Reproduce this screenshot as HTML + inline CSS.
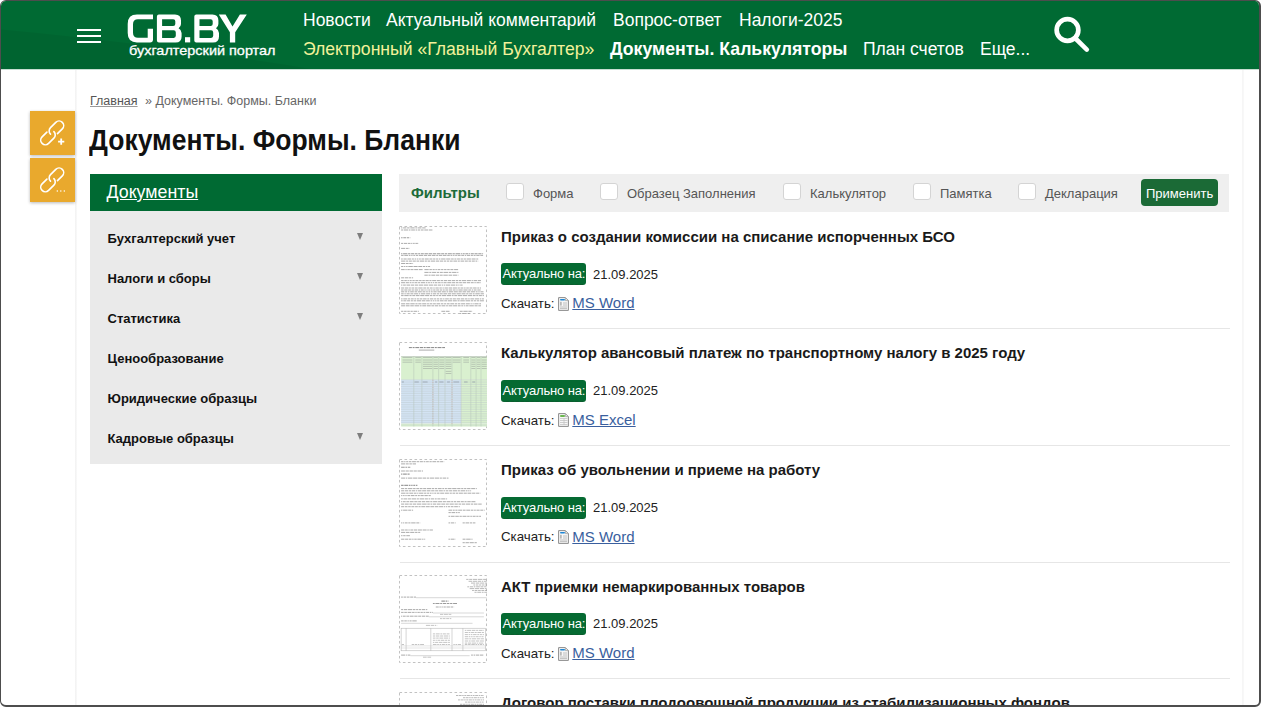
<!DOCTYPE html>
<html><head><meta charset="utf-8">
<style>
html,body{margin:0;padding:0;width:1261px;height:707px;overflow:hidden;background:#fff;}
body{font-family:"Liberation Sans",sans-serif;position:relative;}
.a{position:absolute;white-space:nowrap;line-height:1;}
#frame{position:absolute;left:0;top:0;width:1261px;height:707px;box-sizing:border-box;border-style:solid;border-color:#4d4d4d;border-width:1px 2px 2px 1px;border-radius:6px;overflow:hidden;background:#fff;}
#hdr{position:absolute;left:0;top:0;width:1258px;height:68px;background:#006a33;overflow:hidden;}
.nav{font-size:17.5px;color:#fff;}
.bar{position:absolute;left:76px;width:24px;height:2px;background:#fff;}
.vl{position:absolute;top:69px;width:2px;height:640px;background:linear-gradient(90deg,#f1f1f1,#fafafa);}
.side{font-size:13px;font-weight:bold;color:#111;}
.arr{position:absolute;left:356px;width:0;height:0;border-left:3.5px solid transparent;border-right:3.5px solid transparent;border-top:7px solid #7d7d7d;}
.cb{position:absolute;top:181.8px;width:15.5px;height:15.5px;border:1px solid #d4d4d4;border-radius:3px;background:#fff;}
.flab{font-size:13px;color:#555;}
.thumb{position:absolute;left:398px;width:88px;height:88px;background:#fff;}
.ttl{font-size:15px;font-weight:bold;color:#1a1a1a;}
.badge{position:absolute;left:500px;width:85px;height:21px;background:#056a32;border-radius:3px;border-bottom:1px dashed #0d5a2e;}
.btxt{font-size:13px;color:#fff;letter-spacing:-0.15px;}
.date{font-size:13px;color:#222;}
.dl{font-size:13.3px;color:#222;}
.lnk{font-size:15px;color:#3a5f9e;text-decoration:underline;}
.sep{position:absolute;left:399px;width:830px;height:1px;background:#e6e6e6;}
.ico{position:absolute;left:556.5px;width:11px;height:14px;}
</style></head><body>
<div id="frame">
  <div id="hdr">
    <svg width="1258" height="68" style="position:absolute;left:0;top:0">
      <path d="M0 28.5 C 100 38, 200 50, 310 68 L0 68 Z" fill="#000" opacity="0.055"/>
      <g fill="#fff" fill-rule="evenodd">
        <path d="M152 13.6 L136 13.6 Q126.7 13.6 126.7 23 L126.7 32 Q126.7 41.4 136 41.4 L149 41.4 Q152 41.4 152 38.4 L152 27.8 L146.7 27.8 L146.7 36.8 L137 36.8 Q132 36.8 132 31.8 L132 23.2 Q132 18.2 137 18.2 L152 18.2 Z"/>
        <path d="M157.9 13.6 L174 13.6 Q180 13.6 180 19.6 L180 23 Q180 25.6 177.6 27.2 Q180.6 28.9 180.6 32 L180.6 35.4 Q180.6 41.4 174.6 41.4 L157.9 41.4 Q155.9 41.4 155.9 39.4 L155.9 15.6 Q155.9 13.6 157.9 13.6 Z M161.1 18.2 L172.2 18.2 Q174.3 18.2 174.3 20.3 L174.3 22.9 Q174.3 25 172.2 25 L161.1 25 Z M161.1 29.3 L172.7 29.3 Q174.8 29.3 174.8 31.4 L174.8 34.8 Q174.8 36.9 172.7 36.9 L161.1 36.9 Z"/>
        <rect x="184" y="36.2" width="5.2" height="5.2"/>
        <path transform="translate(37.4 0)" d="M157.9 13.6 L174 13.6 Q180 13.6 180 19.6 L180 23 Q180 25.6 177.6 27.2 Q180.6 28.9 180.6 32 L180.6 35.4 Q180.6 41.4 174.6 41.4 L157.9 41.4 Q155.9 41.4 155.9 39.4 L155.9 15.6 Q155.9 13.6 157.9 13.6 Z M161.1 18.2 L172.2 18.2 Q174.3 18.2 174.3 20.3 L174.3 22.9 Q174.3 25 172.2 25 L161.1 25 Z M161.1 29.3 L172.7 29.3 Q174.8 29.3 174.8 31.4 L174.8 34.8 Q174.8 36.9 172.7 36.9 L161.1 36.9 Z"/>
        <path d="M217.8 13.6 L224.6 13.6 L231.5 25.6 L238.9 13.6 L245.8 13.6 L234.2 31.2 L234.2 41.4 L228.9 41.4 L228.9 31.2 Z"/>
      </g>
    </svg>
    <div class="bar" style="top:28px"></div>
    <div class="bar" style="top:34px"></div>
    <div class="bar" style="top:40px"></div>
    <div class="a" style="left:128.2px;top:43.4px;font-size:13.5px;color:#fff;-webkit-text-stroke:0.3px #fff;transform:scaleX(1.07);transform-origin:0 0">бухгалтерский портал</div>
    <div class="a nav" style="left:302px;top:11px">Новости</div>
    <div class="a nav" style="left:385px;top:11px">Актуальный комментарий</div>
    <div class="a nav" style="left:612px;top:11px">Вопрос-ответ</div>
    <div class="a nav" style="left:738px;top:11px">Налоги-2025</div>
    <div class="a nav" style="left:302px;top:40px;color:#f2f29a;font-size:17.6px">Электронный «Главный Бухгалтер»</div>
    <div class="a nav" style="left:609px;top:40px;font-weight:bold;font-size:17.7px">Документы. Калькуляторы</div>
    <div class="a nav" style="left:862px;top:40px">План счетов</div>
    <div class="a nav" style="left:979px;top:40px">Еще...</div>
    <svg width="44" height="44" style="position:absolute;left:1048.6px;top:12.6px" viewBox="0 0 44 44">
      <circle cx="17.5" cy="16" r="10.85" fill="none" stroke="#fff" stroke-width="4.7"/>
      <line x1="25" y1="24" x2="36.8" y2="35.6" stroke="#fff" stroke-width="4.6" stroke-linecap="round"/>
    </svg>
  </div>
  <div style="position:absolute;left:0;top:68px;width:1258px;height:1px;background:rgba(0,106,51,0.22)"></div>
  <div class="vl" style="left:74px"></div>
  <div class="vl" style="left:1241px;background:linear-gradient(90deg,#f5f5f5,#f9f9f9)"></div>

  <!-- orange link buttons -->
  <div style="position:absolute;left:29px;top:110px;width:44.5px;height:43.6px;background:#e9a92d;box-shadow:0 1px 3px rgba(0,0,0,.28)">
    <svg width="45" height="44" viewBox="0 0 45 44" style="position:absolute;left:0;top:0">
      <g transform="translate(22.2 21.9) rotate(-45)" fill="none" stroke="#fff" stroke-width="1.6" stroke-linecap="round">
        <path d="M3.2 4.3 L10 4.3 A4.6 4.6 0 0 0 10 -4.9 L2.5 -4.9 A4.6 4.6 0 0 0 -2.1 -0.3"/>
        <path d="M-3.2 -4.3 L-10 -4.3 A4.6 4.6 0 0 0 -10 4.9 L-2.5 4.9 A4.6 4.6 0 0 0 2.1 0.3"/>
      </g>
      <g stroke="#fff" stroke-width="1.8"><line x1="28.1" y1="30.6" x2="34.3" y2="30.6"/><line x1="31.2" y1="27.5" x2="31.2" y2="33.7"/></g>
    </svg>
  </div>
  <div style="position:absolute;left:29px;top:157px;width:44.5px;height:43.6px;background:#e9a92d;box-shadow:0 1px 3px rgba(0,0,0,.28)">
    <svg width="45" height="44" viewBox="0 0 45 44" style="position:absolute;left:0;top:0">
      <g transform="translate(22.2 21.9) rotate(-45)" fill="none" stroke="#fff" stroke-width="1.6" stroke-linecap="round">
        <path d="M3.2 4.3 L10 4.3 A4.6 4.6 0 0 0 10 -4.9 L2.5 -4.9 A4.6 4.6 0 0 0 -2.1 -0.3"/>
        <path d="M-3.2 -4.3 L-10 -4.3 A4.6 4.6 0 0 0 -10 4.9 L-2.5 4.9 A4.6 4.6 0 0 0 2.1 0.3"/>
      </g>
      <g fill="#fff"><circle cx="27.3" cy="33" r="0.75"/><circle cx="30.8" cy="33" r="0.75"/><circle cx="34.3" cy="33" r="0.75"/></g>
    </svg>
  </div>

  <!-- breadcrumb & title -->
  <div class="a" style="left:89px;top:94px;font-size:12.5px;color:#555;text-decoration:underline;text-decoration-color:#9a9a9a">Главная</div>
  <div class="a" style="left:144px;top:94px;font-size:12.5px;color:#666">»&nbsp;Документы. Формы. Бланки</div>
  <div class="a" style="left:88px;top:126.6px;font-size:26.5px;font-weight:bold;color:#111;transform:scaleY(1.1);transform-origin:0 22.4px">Документы. Формы. Бланки</div>

  <!-- sidebar -->
  <div style="position:absolute;left:89px;top:173px;width:292px;height:37px;background:#006a33"></div>
  <div class="a" style="left:105.5px;top:183px;font-size:17.8px;color:#fff;text-decoration:underline">Документы</div>
  <div style="position:absolute;left:89px;top:210px;width:292px;height:253px;background:#eaeaea"></div>
  <div class="a side" style="left:106.5px;top:230.5px">Бухгалтерский учет</div>
  <div class="arr" style="top:232px"></div>
  <div class="a side" style="left:106.5px;top:270.5px">Налоги и сборы</div>
  <div class="arr" style="top:272px"></div>
  <div class="a side" style="left:106.5px;top:310.5px">Статистика</div>
  <div class="arr" style="top:312px"></div>
  <div class="a side" style="left:106.5px;top:350.5px">Ценообразование</div>
  <div class="a side" style="left:106.5px;top:390.5px">Юридические образцы</div>
  <div class="a side" style="left:106.5px;top:430.5px">Кадровые образцы</div>
  <div class="arr" style="top:432px"></div>

  <!-- filter bar -->
  <div style="position:absolute;left:398px;top:173px;width:830px;height:38px;background:#efefef"></div>
  <div class="a" style="left:410px;top:184px;font-size:15px;font-weight:bold;color:#1d6b3a">Фильтры</div>
  <div class="cb" style="left:505px"></div><div class="a flab" style="left:532px;top:186px">Форма</div>
  <div class="cb" style="left:599px"></div><div class="a flab" style="left:626px;top:186px">Образец Заполнения</div>
  <div class="cb" style="left:782px"></div><div class="a flab" style="left:809px;top:186px">Калькулятор</div>
  <div class="cb" style="left:912px"></div><div class="a flab" style="left:939px;top:186px">Памятка</div>
  <div class="cb" style="left:1017px"></div><div class="a flab" style="left:1044px;top:186px">Декларация</div>
  <div style="position:absolute;left:1140px;top:178px;width:77px;height:27px;background:#1b6a36;border-radius:4px"></div>
  <div class="a" style="left:1145px;top:186px;font-size:13px;color:#fff">Применить</div>

  <div id="items"><div class="thumb" style="top:224.50px"><svg width="88" height="88" viewBox="0 0 88 88" style="position:absolute;left:0;top:0"><rect x="0.5" y="0.5" width="87" height="87" fill="none" stroke="#c2c2c2" stroke-width="1" stroke-dasharray="2.6 2.4"/><g transform="translate(1 1)"><line x1="1.1" y1="0.9" x2="25.9" y2="0.9" stroke="#9c9c9c" stroke-width="0.85" stroke-dasharray="1.3 0.7 3.3 0.7 2.5 0.7 4.4 0.7 1.5 0.7 3.9 0.7 3.4 0.7"/><line x1="1.1" y1="3.0" x2="32.9" y2="3.0" stroke="#9c9c9c" stroke-width="0.85" stroke-dasharray="2.0 0.7 4.3 0.7 1.7 0.7 3.7 0.7 1.6 0.7 2.1 0.7 2.9 0.7 3.7 0.7 3.7 0.7"/><line x1="1.1" y1="10.8" x2="10.3" y2="10.8" stroke="#9c9c9c" stroke-width="1.1" stroke-dasharray="1.5 0.7 3.0 0.7 2.0 0.7 4.5 0.7"/><line x1="1.1" y1="16.4" x2="18.8" y2="16.4" stroke="#9c9c9c" stroke-width="0.85" stroke-dasharray="2.0 0.7 3.2 0.7 2.8 0.7 1.2 0.7 1.6 0.7 2.5 0.7 1.4 0.7"/><line x1="1.1" y1="21.4" x2="9.6" y2="21.4" stroke="#9c9c9c" stroke-width="0.85" stroke-dasharray="4.0 0.7 2.8 0.7 4.5 0.7"/><line x1="1.1" y1="26.7" x2="83.1" y2="26.7" stroke="#9c9c9c" stroke-width="1.1" stroke-dasharray="1.3 0.7 4.3 0.7 2.3 0.7 3.0 0.7 2.7 0.7 2.0 0.7 2.9 0.7 3.4 0.7 3.5 0.7 3.4 0.7 3.6 0.7 2.9 0.7 2.5 0.7 3.8 0.7 2.3 0.7 4.5 0.7 1.2 0.7 2.1 0.7 3.0 0.7 1.2 0.7 2.8 0.7 3.1 0.7 3.2 0.7 1.5 0.7"/><line x1="1.1" y1="28.4" x2="83.1" y2="28.4" stroke="#9c9c9c" stroke-width="0.85" stroke-dasharray="2.5 0.7 3.8 0.7 1.7 0.7 1.4 0.7 1.9 0.7 2.4 0.7 4.1 0.7 3.2 0.7 3.5 0.7 3.6 0.7 2.1 0.7 3.0 0.7 3.8 0.7 2.6 0.7 1.9 0.7 1.4 0.7 1.7 0.7 3.0 0.7 2.9 0.7 1.3 0.7 3.4 0.7 1.9 0.7 2.0 0.7 3.3 0.7 3.3 0.7"/><line x1="1.1" y1="32.0" x2="78.2" y2="32.0" stroke="#9c9c9c" stroke-width="0.85" stroke-dasharray="1.7 0.7 3.2 0.7 3.7 0.7 2.1 0.7 1.5 0.7 1.6 0.7 1.7 0.7 2.5 0.7 4.0 0.7 3.0 0.7 2.3 0.7 2.0 0.7 1.6 0.7 4.4 0.7 4.2 0.7 2.6 0.7 2.0 0.7 2.8 0.7 2.3 0.7 2.3 0.7 4.3 0.7 4.0 0.7 4.3 0.7"/><line x1="1.1" y1="34.1" x2="78.2" y2="34.1" stroke="#9c9c9c" stroke-width="0.85" stroke-dasharray="4.3 0.7 2.0 0.7 3.1 0.7 3.2 0.7 2.7 0.7 4.2 0.7 2.1 0.7 2.5 0.7 4.4 0.7 3.1 0.7 3.4 0.7 2.4 0.7 2.4 0.7 2.7 0.7 3.8 0.7 1.9 0.7 3.8 0.7 2.8 0.7 2.7 0.7 2.9 0.7 1.6 0.7 1.3 0.7"/><line x1="1.1" y1="36.5" x2="13.1" y2="36.5" stroke="#9c9c9c" stroke-width="0.85" stroke-dasharray="3.9 0.7 2.9 0.7 2.4 0.7 4.1 0.7"/><line x1="1.1" y1="39.5" x2="30.1" y2="39.5" stroke="#9c9c9c" stroke-width="0.85" stroke-dasharray="2.3 0.7 1.3 0.7 1.5 0.7 4.5 0.7 4.1 0.7 3.9 0.7 2.4 0.7 1.4 0.7 2.8 0.7"/><line x1="1.1" y1="42.6" x2="23.0" y2="42.6" stroke="#9c9c9c" stroke-width="0.85" stroke-dasharray="3.6 0.7 1.3 0.7 2.4 0.7 3.0 0.7 4.0 0.7 3.7 0.7"/><line x1="24.4" y1="42.6" x2="58.4" y2="42.6" stroke="#9c9c9c" stroke-width="0.85" stroke-dasharray="4.3 0.7 2.5 0.7 2.1 0.7 1.5 0.7 2.8 0.7 2.3 0.7 2.4 0.7 2.5 0.7 3.0 0.7 4.0 0.7"/><line x1="24.4" y1="45.4" x2="58.4" y2="45.4" stroke="#9c9c9c" stroke-width="0.85" stroke-dasharray="4.2 0.7 2.1 0.7 4.0 0.7 2.4 0.7 2.9 0.7 4.5 0.7 2.7 0.7 4.4 0.7 1.6 0.7"/><line x1="24.4" y1="48.2" x2="58.4" y2="48.2" stroke="#9c9c9c" stroke-width="0.85" stroke-dasharray="3.4 0.7 2.1 0.7 3.8 0.7 3.2 0.7 3.0 0.7 4.4 0.7 3.7 0.7 4.2 0.7 3.5 0.7"/><line x1="1.1" y1="50.8" x2="13.1" y2="50.8" stroke="#9c9c9c" stroke-width="0.85" stroke-dasharray="3.0 0.7 3.6 0.7 2.1 0.7 3.4 0.7"/><line x1="1.1" y1="53.6" x2="81.0" y2="53.6" stroke="#9c9c9c" stroke-width="0.85" stroke-dasharray="2.5 0.7 2.5 0.7 1.4 0.7 2.1 0.7 2.3 0.7 3.0 0.7 2.5 0.7 2.5 0.7 3.2 0.7 2.1 0.7 4.1 0.7 2.9 0.7 2.5 0.7 3.5 0.7 3.2 0.7 3.4 0.7 2.3 0.7 2.3 0.7 4.2 0.7 4.0 0.7 1.3 0.7 3.5 0.7 3.5 0.7"/><line x1="1.1" y1="55.7" x2="81.0" y2="55.7" stroke="#9c9c9c" stroke-width="0.85" stroke-dasharray="4.0 0.7 3.1 0.7 1.9 0.7 1.6 0.7 2.9 0.7 2.0 0.7 4.4 0.7 1.5 0.7 1.8 0.7 1.4 0.7 1.4 0.7 2.6 0.7 2.5 0.7 1.5 0.7 3.1 0.7 4.1 0.7 3.0 0.7 2.7 0.7 2.7 0.7 3.7 0.7 3.1 0.7 2.9 0.7 1.4 0.7 3.2 0.7 3.0 0.7"/><line x1="1.1" y1="58.1" x2="62.6" y2="58.1" stroke="#9c9c9c" stroke-width="0.85" stroke-dasharray="1.3 0.7 2.7 0.7 3.7 0.7 3.4 0.7 3.2 0.7 4.3 0.7 4.4 0.7 4.0 0.7 3.3 0.7 3.6 0.7 1.3 0.7 1.3 0.7 4.0 0.7 4.3 0.7 1.9 0.7 1.2 0.7 3.0 0.7"/><line x1="1.1" y1="61.0" x2="81.0" y2="61.0" stroke="#9c9c9c" stroke-width="0.85" stroke-dasharray="3.2 0.7 3.4 0.7 1.7 0.7 2.5 0.7 2.9 0.7 4.3 0.7 2.7 0.7 2.5 0.7 2.7 0.7 1.4 0.7 3.3 0.7 2.4 0.7 1.3 0.7 3.4 0.7 3.5 0.7 4.1 0.7 2.2 0.7 2.9 0.7 1.5 0.7 2.5 0.7 2.9 0.7 3.5 0.7 1.7 0.7 3.9 0.7"/><line x1="1.1" y1="63.0" x2="81.0" y2="63.0" stroke="#9c9c9c" stroke-width="0.85" stroke-dasharray="2.5 0.7 3.2 0.7 2.7 0.7 2.3 0.7 3.4 0.7 1.3 0.7 3.0 0.7 1.3 0.7 1.2 0.7 2.1 0.7 1.4 0.7 2.3 0.7 2.8 0.7 2.3 0.7 2.0 0.7 2.6 0.7 3.4 0.7 2.8 0.7 1.4 0.7 4.3 0.7 4.2 0.7 2.9 0.7 1.2 0.7 2.8 0.7 3.4 0.7"/><line x1="1.1" y1="64.8" x2="83.9" y2="64.8" stroke="#9c9c9c" stroke-width="0.85" stroke-dasharray="3.3 0.7 2.0 0.7 1.7 0.7 3.6 0.7 2.7 0.7 3.9 0.7 2.9 0.7 1.7 0.7 1.5 0.7 2.0 0.7 3.3 0.7 3.6 0.7 4.1 0.7 1.5 0.7 4.4 0.7 4.0 0.7 3.3 0.7 3.6 0.7 3.5 0.7 4.1 0.7 1.8 0.7 1.4 0.7 3.1 0.7"/><line x1="1.1" y1="66.8" x2="83.9" y2="66.8" stroke="#9c9c9c" stroke-width="0.85" stroke-dasharray="2.6 0.7 1.4 0.7 3.2 0.7 3.0 0.7 3.9 0.7 1.5 0.7 4.5 0.7 4.0 0.7 1.2 0.7 3.4 0.7 2.3 0.7 2.9 0.7 3.9 0.7 3.0 0.7 4.1 0.7 4.3 0.7 4.0 0.7 2.3 0.7 2.9 0.7 1.8 0.7 4.5 0.7 4.0 0.7"/><line x1="1.1" y1="68.6" x2="83.9" y2="68.6" stroke="#9c9c9c" stroke-width="0.85" stroke-dasharray="2.5 0.7 4.4 0.7 2.2 0.7 3.0 0.7 3.5 0.7 4.2 0.7 4.0 0.7 2.6 0.7 2.4 0.7 1.7 0.7 2.6 0.7 4.4 0.7 4.0 0.7 1.9 0.7 3.0 0.7 4.3 0.7 4.1 0.7 4.3 0.7 2.8 0.7 1.9 0.7 3.0 0.7 1.3 0.7"/><line x1="1.1" y1="71.9" x2="83.9" y2="71.9" stroke="#9c9c9c" stroke-width="0.85" stroke-dasharray="1.5 0.7 3.7 0.7 2.3 0.7 3.0 0.7 1.9 0.7 1.9 0.7 2.8 0.7 3.5 0.7 2.0 0.7 3.4 0.7 1.9 0.7 2.5 0.7 2.5 0.7 1.4 0.7 3.6 0.7 2.6 0.7 3.1 0.7 3.4 0.7 3.3 0.7 2.8 0.7 1.5 0.7 3.7 0.7 4.4 0.7 1.2 0.7 2.9 0.7"/><line x1="1.1" y1="73.8" x2="83.9" y2="73.8" stroke="#9c9c9c" stroke-width="0.85" stroke-dasharray="1.6 0.7 3.0 0.7 3.1 0.7 2.0 0.7 2.6 0.7 4.4 0.7 3.4 0.7 3.7 0.7 1.5 0.7 1.7 0.7 1.4 0.7 2.0 0.7 3.7 0.7 2.9 0.7 4.4 0.7 3.8 0.7 2.1 0.7 4.5 0.7 4.5 0.7 2.6 0.7 2.3 0.7 2.3 0.7 3.9 0.7"/><line x1="1.1" y1="76.8" x2="81.0" y2="76.8" stroke="#9c9c9c" stroke-width="0.85" stroke-dasharray="4.0 0.7 3.8 0.7 4.4 0.7 2.2 0.7 3.2 0.7 4.2 0.7 1.8 0.7 2.8 0.7 2.7 0.7 3.7 0.7 2.5 0.7 2.1 0.7 2.7 0.7 3.9 0.7 2.4 0.7 2.4 0.7 4.1 0.7 3.9 0.7 1.3 0.7 1.2 0.7 4.2 0.7 3.0 0.7"/><line x1="1.1" y1="78.8" x2="81.0" y2="78.8" stroke="#9c9c9c" stroke-width="0.85" stroke-dasharray="4.2 0.7 3.6 0.7 3.5 0.7 4.5 0.7 1.9 0.7 3.8 0.7 3.9 0.7 2.9 0.7 3.2 0.7 1.9 0.7 3.9 0.7 1.8 0.7 3.8 0.7 4.1 0.7 2.7 0.7 1.7 0.7 1.2 0.7 3.0 0.7 4.5 0.7 3.1 0.7 2.8 0.7"/><line x1="1.1" y1="84.3" x2="18.8" y2="84.3" stroke="#9c9c9c" stroke-width="0.85" stroke-dasharray="2.3 0.7 2.5 0.7 2.5 0.7 2.3 0.7 3.8 0.7 2.0 0.7"/><line x1="41.4" y1="84.3" x2="49.9" y2="84.3" stroke="#9c9c9c" stroke-width="0.85" stroke-dasharray="3.7 0.7 3.7 0.7"/><line x1="59.8" y1="84.3" x2="72.5" y2="84.3" stroke="#9c9c9c" stroke-width="0.85" stroke-dasharray="2.9 0.7 4.3 0.7 3.3 0.7 1.5 0.7"/><line x1="59.8" y1="86.7" x2="69.7" y2="86.7" stroke="#9c9c9c" stroke-width="0.85" stroke-dasharray="1.3 0.7 2.0 0.7 2.3 0.7 2.9 0.7"/></g></svg></div>
<div class="a ttl" style="left:500px;top:227.80px">Приказ о создании комиссии на списание испорченных БСО</div>
<div class="badge" style="top:262.20px"></div>
<div class="a btxt" style="left:501.6px;top:266.30px">Актуально на:</div>
<div class="a date" style="left:592px;top:266.50px">21.09.2025</div>
<div class="a dl" style="left:500px;top:296.00px">Скачать:</div>
<div class="ico" style="top:295.80px"><svg width="11" height="14" viewBox="0 0 11 14" style="position:absolute;left:0;top:0"><path d="M0.6 0.6 H7.4 L10.4 3.6 V13.4 H0.6 Z" fill="#f7f7f7" stroke="#8c8c8c" stroke-width="1"/><path d="M7.4 0.6 V3.6 H10.4" fill="none" stroke="#a0a0a0" stroke-width="0.8"/><rect x="2" y="2" width="5" height="1.6" rx="0.8" fill="#1c86d6"/><rect x="2.2" y="4.8" width="1.4" height="3.8" fill="#a8a8a8"/><g stroke="#b0b0b0" stroke-width="0.8"><line x1="5" y1="6" x2="9" y2="6"/><line x1="5" y1="8" x2="9" y2="8"/><line x1="2" y1="10" x2="9" y2="10"/><line x1="2" y1="11.6" x2="9" y2="11.6"/></g></svg></div>
<div class="a lnk" style="left:571.3px;top:294.30px">MS Word</div>
<div class="sep" style="top:327.30px"></div>
<div class="thumb" style="top:341.15px"><svg width="88" height="88" viewBox="0 0 88 88" style="position:absolute;left:0;top:0"><rect x="0.5" y="0.5" width="87" height="87" fill="none" stroke="#c2c2c2" stroke-width="1" stroke-dasharray="2.6 2.4"/><g transform="translate(1 1)"><rect x="1.1" y="13.5" width="86.3" height="23.3" fill="#d9f0cf"/><rect x="1.1" y="36.8" width="60.1" height="43.7" fill="#d3e3f3"/><rect x="61.2" y="36.8" width="26.2" height="43.7" fill="#d9f0cf"/><rect x="1.1" y="80.6" width="86.3" height="3.0" fill="#d9f0cf"/><line x1="32.9" y1="36.8" x2="32.9" y2="80.6" stroke="#e08080" stroke-width="0.6" stroke-dasharray="0.8 1.6"/><line x1="52.0" y1="36.8" x2="52.0" y2="80.6" stroke="#e08080" stroke-width="0.6" stroke-dasharray="0.8 1.6"/><line x1="13.8" y1="13.5" x2="13.8" y2="83.5" stroke="#b5c5b5" stroke-width="0.5"/><line x1="21.9" y1="13.5" x2="21.9" y2="83.5" stroke="#b5c5b5" stroke-width="0.5"/><line x1="32.9" y1="13.5" x2="32.9" y2="83.5" stroke="#b5c5b5" stroke-width="0.5"/><line x1="38.6" y1="13.5" x2="38.6" y2="83.5" stroke="#b5c5b5" stroke-width="0.5"/><line x1="45.0" y1="13.5" x2="45.0" y2="83.5" stroke="#b5c5b5" stroke-width="0.5"/><line x1="52.0" y1="13.5" x2="52.0" y2="83.5" stroke="#b5c5b5" stroke-width="0.5"/><line x1="61.2" y1="13.5" x2="61.2" y2="83.5" stroke="#b5c5b5" stroke-width="0.5"/><line x1="70.8" y1="13.5" x2="70.8" y2="83.5" stroke="#b5c5b5" stroke-width="0.5"/><line x1="76.1" y1="13.5" x2="76.1" y2="83.5" stroke="#b5c5b5" stroke-width="0.5"/><line x1="81.0" y1="13.5" x2="81.0" y2="83.5" stroke="#b5c5b5" stroke-width="0.5"/><line x1="1.1" y1="36.8" x2="87.4" y2="36.8" stroke="#b8c4c8" stroke-width="0.4"/><line x1="1.1" y1="39.1" x2="87.4" y2="39.1" stroke="#b8c4c8" stroke-width="0.4"/><line x1="1.1" y1="41.4" x2="87.4" y2="41.4" stroke="#b8c4c8" stroke-width="0.4"/><line x1="1.1" y1="43.6" x2="87.4" y2="43.6" stroke="#b8c4c8" stroke-width="0.4"/><line x1="1.1" y1="45.9" x2="87.4" y2="45.9" stroke="#b8c4c8" stroke-width="0.4"/><line x1="1.1" y1="48.2" x2="87.4" y2="48.2" stroke="#b8c4c8" stroke-width="0.4"/><line x1="1.1" y1="50.4" x2="87.4" y2="50.4" stroke="#b8c4c8" stroke-width="0.4"/><line x1="1.1" y1="52.7" x2="87.4" y2="52.7" stroke="#b8c4c8" stroke-width="0.4"/><line x1="1.1" y1="55.0" x2="87.4" y2="55.0" stroke="#b8c4c8" stroke-width="0.4"/><line x1="1.1" y1="57.2" x2="87.4" y2="57.2" stroke="#b8c4c8" stroke-width="0.4"/><line x1="1.1" y1="59.5" x2="87.4" y2="59.5" stroke="#b8c4c8" stroke-width="0.4"/><line x1="1.1" y1="61.7" x2="87.4" y2="61.7" stroke="#b8c4c8" stroke-width="0.4"/><line x1="1.1" y1="64.0" x2="87.4" y2="64.0" stroke="#b8c4c8" stroke-width="0.4"/><line x1="1.1" y1="66.3" x2="87.4" y2="66.3" stroke="#b8c4c8" stroke-width="0.4"/><line x1="1.1" y1="68.5" x2="87.4" y2="68.5" stroke="#b8c4c8" stroke-width="0.4"/><line x1="1.1" y1="70.8" x2="87.4" y2="70.8" stroke="#b8c4c8" stroke-width="0.4"/><line x1="1.1" y1="73.1" x2="87.4" y2="73.1" stroke="#b8c4c8" stroke-width="0.4"/><line x1="1.1" y1="75.3" x2="87.4" y2="75.3" stroke="#b8c4c8" stroke-width="0.4"/><line x1="1.1" y1="77.6" x2="87.4" y2="77.6" stroke="#b8c4c8" stroke-width="0.4"/><line x1="1.1" y1="79.8" x2="87.4" y2="79.8" stroke="#b8c4c8" stroke-width="0.4"/><line x1="1.1" y1="82.1" x2="87.4" y2="82.1" stroke="#b8c4c8" stroke-width="0.4"/><line x1="1.1" y1="13.5" x2="87.4" y2="13.5" stroke="#aab5aa" stroke-width="0.5"/><line x1="8.9" y1="4.6" x2="45.0" y2="4.6" stroke="#777" stroke-width="0.9" stroke-dasharray="3 0.7 2 0.7 4 0.7"/><line x1="18.8" y1="7.1" x2="34.3" y2="7.1" stroke="#888" stroke-width="0.7"/><line x1="2.5" y1="14.5" x2="12.4" y2="14.5" stroke="#a0a8a0" stroke-width="0.6"/><line x1="2.5" y1="17.0" x2="12.4" y2="17.0" stroke="#a0a8a0" stroke-width="0.6"/><line x1="2.5" y1="19.2" x2="12.4" y2="19.2" stroke="#a0a8a0" stroke-width="0.6"/><line x1="15.3" y1="14.5" x2="20.9" y2="14.5" stroke="#a0a8a0" stroke-width="0.6"/><line x1="15.3" y1="17.0" x2="20.9" y2="17.0" stroke="#a0a8a0" stroke-width="0.6"/><line x1="15.3" y1="19.2" x2="20.9" y2="19.2" stroke="#a0a8a0" stroke-width="0.6"/><line x1="23.0" y1="14.5" x2="32.2" y2="14.5" stroke="#a0a8a0" stroke-width="0.6"/><line x1="23.0" y1="17.0" x2="32.2" y2="17.0" stroke="#a0a8a0" stroke-width="0.6"/><line x1="23.0" y1="19.2" x2="32.2" y2="19.2" stroke="#a0a8a0" stroke-width="0.6"/><line x1="23.0" y1="21.3" x2="32.2" y2="21.3" stroke="#a0a8a0" stroke-width="0.6"/><line x1="23.0" y1="23.4" x2="32.2" y2="23.4" stroke="#a0a8a0" stroke-width="0.6"/><line x1="23.0" y1="25.5" x2="32.2" y2="25.5" stroke="#a0a8a0" stroke-width="0.6"/><line x1="33.6" y1="14.5" x2="37.9" y2="14.5" stroke="#a0a8a0" stroke-width="0.6"/><line x1="33.6" y1="17.0" x2="37.9" y2="17.0" stroke="#a0a8a0" stroke-width="0.6"/><line x1="33.6" y1="19.2" x2="37.9" y2="19.2" stroke="#a0a8a0" stroke-width="0.6"/><line x1="33.6" y1="21.3" x2="37.9" y2="21.3" stroke="#a0a8a0" stroke-width="0.6"/><line x1="33.6" y1="23.4" x2="37.9" y2="23.4" stroke="#a0a8a0" stroke-width="0.6"/><line x1="33.6" y1="25.5" x2="37.9" y2="25.5" stroke="#a0a8a0" stroke-width="0.6"/><line x1="39.3" y1="14.5" x2="44.2" y2="14.5" stroke="#a0a8a0" stroke-width="0.6"/><line x1="39.3" y1="17.0" x2="44.2" y2="17.0" stroke="#a0a8a0" stroke-width="0.6"/><line x1="39.3" y1="19.2" x2="44.2" y2="19.2" stroke="#a0a8a0" stroke-width="0.6"/><line x1="39.3" y1="21.3" x2="44.2" y2="21.3" stroke="#a0a8a0" stroke-width="0.6"/><line x1="39.3" y1="23.4" x2="44.2" y2="23.4" stroke="#a0a8a0" stroke-width="0.6"/><line x1="39.3" y1="25.5" x2="44.2" y2="25.5" stroke="#a0a8a0" stroke-width="0.6"/><line x1="45.7" y1="14.5" x2="51.3" y2="14.5" stroke="#a0a8a0" stroke-width="0.6"/><line x1="45.7" y1="17.0" x2="51.3" y2="17.0" stroke="#a0a8a0" stroke-width="0.6"/><line x1="45.7" y1="19.2" x2="51.3" y2="19.2" stroke="#a0a8a0" stroke-width="0.6"/><line x1="45.7" y1="21.3" x2="51.3" y2="21.3" stroke="#a0a8a0" stroke-width="0.6"/><line x1="45.7" y1="23.4" x2="51.3" y2="23.4" stroke="#a0a8a0" stroke-width="0.6"/><line x1="45.7" y1="25.5" x2="51.3" y2="25.5" stroke="#a0a8a0" stroke-width="0.6"/><line x1="45.7" y1="28.4" x2="51.3" y2="28.4" stroke="#a0a8a0" stroke-width="0.6"/><line x1="45.7" y1="30.5" x2="51.3" y2="30.5" stroke="#a0a8a0" stroke-width="0.6"/><line x1="52.7" y1="14.5" x2="60.5" y2="14.5" stroke="#a0a8a0" stroke-width="0.6"/><line x1="52.7" y1="17.0" x2="60.5" y2="17.0" stroke="#a0a8a0" stroke-width="0.6"/><line x1="52.7" y1="19.2" x2="60.5" y2="19.2" stroke="#a0a8a0" stroke-width="0.6"/><line x1="63.3" y1="14.5" x2="69.0" y2="14.5" stroke="#a0a8a0" stroke-width="0.6"/><line x1="63.3" y1="17.0" x2="69.0" y2="17.0" stroke="#a0a8a0" stroke-width="0.6"/><line x1="63.3" y1="19.2" x2="69.0" y2="19.2" stroke="#a0a8a0" stroke-width="0.6"/><line x1="71.4" y1="14.5" x2="75.4" y2="14.5" stroke="#a0a8a0" stroke-width="0.6"/><line x1="71.4" y1="17.0" x2="75.4" y2="17.0" stroke="#a0a8a0" stroke-width="0.6"/><line x1="71.4" y1="19.2" x2="75.4" y2="19.2" stroke="#a0a8a0" stroke-width="0.6"/><line x1="71.4" y1="21.3" x2="75.4" y2="21.3" stroke="#a0a8a0" stroke-width="0.6"/><line x1="71.4" y1="23.4" x2="75.4" y2="23.4" stroke="#a0a8a0" stroke-width="0.6"/><line x1="71.4" y1="25.5" x2="75.4" y2="25.5" stroke="#a0a8a0" stroke-width="0.6"/><line x1="76.8" y1="14.5" x2="80.3" y2="14.5" stroke="#a0a8a0" stroke-width="0.6"/><line x1="76.8" y1="17.0" x2="80.3" y2="17.0" stroke="#a0a8a0" stroke-width="0.6"/><line x1="76.8" y1="19.2" x2="80.3" y2="19.2" stroke="#a0a8a0" stroke-width="0.6"/><line x1="76.8" y1="21.3" x2="80.3" y2="21.3" stroke="#a0a8a0" stroke-width="0.6"/><line x1="76.8" y1="23.4" x2="80.3" y2="23.4" stroke="#a0a8a0" stroke-width="0.6"/><line x1="76.8" y1="25.5" x2="80.3" y2="25.5" stroke="#a0a8a0" stroke-width="0.6"/><line x1="81.7" y1="14.5" x2="86.7" y2="14.5" stroke="#a0a8a0" stroke-width="0.6"/><line x1="81.7" y1="17.0" x2="86.7" y2="17.0" stroke="#a0a8a0" stroke-width="0.6"/><line x1="81.7" y1="19.2" x2="86.7" y2="19.2" stroke="#a0a8a0" stroke-width="0.6"/><line x1="81.7" y1="21.3" x2="86.7" y2="21.3" stroke="#a0a8a0" stroke-width="0.6"/><line x1="81.7" y1="23.4" x2="86.7" y2="23.4" stroke="#a0a8a0" stroke-width="0.6"/><line x1="81.7" y1="25.5" x2="86.7" y2="25.5" stroke="#a0a8a0" stroke-width="0.6"/><line x1="1.8" y1="39.0" x2="3.9" y2="39.0" stroke="#8a96a0" stroke-width="0.7"/><line x1="14.5" y1="39.0" x2="18.8" y2="39.0" stroke="#8a96a0" stroke-width="0.7"/><line x1="22.7" y1="39.0" x2="27.6" y2="39.0" stroke="#8a96a0" stroke-width="0.7"/><line x1="35.1" y1="39.0" x2="37.2" y2="39.0" stroke="#8a96a0" stroke-width="0.7"/><line x1="39.3" y1="39.0" x2="43.5" y2="39.0" stroke="#8a96a0" stroke-width="0.7"/><line x1="47.1" y1="39.0" x2="49.9" y2="39.0" stroke="#8a96a0" stroke-width="0.7"/><line x1="53.4" y1="39.0" x2="59.1" y2="39.0" stroke="#8a96a0" stroke-width="0.7"/><line x1="64.1" y1="39.0" x2="67.6" y2="39.0" stroke="#8a96a0" stroke-width="0.7"/><line x1="72.3" y1="39.0" x2="75.1" y2="39.0" stroke="#8a96a0" stroke-width="0.7"/></g></svg></div>
<div class="a ttl" style="left:500px;top:344.45px">Калькулятор авансовый платеж по транспортному налогу в 2025 году</div>
<div class="badge" style="top:378.85px"></div>
<div class="a btxt" style="left:501.6px;top:382.95px">Актуально на:</div>
<div class="a date" style="left:592px;top:383.15px">21.09.2025</div>
<div class="a dl" style="left:500px;top:412.65px">Скачать:</div>
<div class="ico" style="top:412.45px"><svg width="11" height="14" viewBox="0 0 11 14" style="position:absolute;left:0;top:0"><path d="M0.6 0.6 H7.4 L10.4 3.6 V13.4 H0.6 Z" fill="#f7f7f7" stroke="#8c8c8c" stroke-width="1"/><path d="M7.4 0.6 V3.6 H10.4" fill="none" stroke="#a0a0a0" stroke-width="0.8"/><rect x="2" y="2.2" width="5" height="1.6" rx="0.8" fill="#3fa21a"/><g stroke="#c4c4c4" stroke-width="0.8"><line x1="2" y1="5.5" x2="9.5" y2="5.5"/><line x1="2" y1="7.5" x2="9.5" y2="7.5"/><line x1="2" y1="9.5" x2="9.5" y2="9.5"/><line x1="2" y1="11.5" x2="9.5" y2="11.5"/><line x1="6" y1="5" x2="6" y2="12"/></g></svg></div>
<div class="a lnk" style="left:571.3px;top:410.95px">MS Excel</div>
<div class="sep" style="top:443.95px"></div>
<div class="thumb" style="top:457.80px"><svg width="88" height="88" viewBox="0 0 88 88" style="position:absolute;left:0;top:0"><rect x="0.5" y="0.5" width="87" height="87" fill="none" stroke="#c2c2c2" stroke-width="1" stroke-dasharray="2.6 2.4"/><g transform="translate(1 1)"><line x1="1.1" y1="1.7" x2="44.2" y2="1.7" stroke="#9c9c9c" stroke-width="0.85" stroke-dasharray="2.4 0.7 1.3 0.7 1.8 0.7 2.7 0.7 3.8 0.7 2.7 0.7 2.9 0.7 1.8 0.7 2.7 0.7 2.2 0.7 3.8 0.7 2.5 0.7 3.2 0.7 1.6 0.7"/><line x1="1.1" y1="3.9" x2="16.0" y2="3.9" stroke="#9c9c9c" stroke-width="0.85" stroke-dasharray="4.0 0.7 2.9 0.7 2.5 0.7 3.9 0.7"/><line x1="1.1" y1="7.3" x2="10.3" y2="7.3" stroke="#9c9c9c" stroke-width="1.1" stroke-dasharray="3.6 0.7 1.9 0.7 4.1 0.7"/><line x1="1.1" y1="11.0" x2="23.0" y2="11.0" stroke="#9c9c9c" stroke-width="0.85" stroke-dasharray="3.8 0.7 3.2 0.7 3.4 0.7 3.2 0.7 3.5 0.7 2.0 0.7"/><line x1="1.1" y1="14.1" x2="9.6" y2="14.1" stroke="#9c9c9c" stroke-width="1.1" stroke-dasharray="1.3 0.7 3.7 0.7 3.2 0.7"/><line x1="1.1" y1="18.1" x2="48.5" y2="18.1" stroke="#9c9c9c" stroke-width="0.85" stroke-dasharray="4.2 0.7 1.3 0.7 4.4 0.7 4.3 0.7 3.8 0.7 3.5 0.7 2.4 0.7 4.4 0.7 4.2 0.7 2.0 0.7 3.4 0.7 3.5 0.7"/><line x1="1.1" y1="25.4" x2="17.4" y2="25.4" stroke="#9c9c9c" stroke-width="1.1" stroke-dasharray="2.5 0.7 3.8 0.7 1.7 0.7 1.4 0.7 1.9 0.7 2.4 0.7"/><line x1="1.1" y1="28.6" x2="76.8" y2="28.6" stroke="#9c9c9c" stroke-width="0.85" stroke-dasharray="3.1 0.7 2.4 0.7 4.4 0.7 2.5 0.7 2.7 0.7 2.8 0.7 3.0 0.7 4.4 0.7 2.3 0.7 2.1 0.7 3.8 0.7 1.8 0.7 2.1 0.7 3.9 0.7 4.3 0.7 3.3 0.7 2.2 0.7 2.3 0.7 3.4 0.7 3.8 0.7 3.3 0.7"/><line x1="1.1" y1="30.8" x2="71.1" y2="30.8" stroke="#9c9c9c" stroke-width="0.85" stroke-dasharray="2.9 0.7 3.5 0.7 2.1 0.7 3.4 0.7 1.3 0.7 3.7 0.7 3.8 0.7 3.8 0.7 3.3 0.7 2.8 0.7 4.1 0.7 1.6 0.7 2.6 0.7 3.2 0.7 4.0 0.7 2.2 0.7 4.4 0.7 1.8 0.7 1.3 0.7 2.7 0.7"/><line x1="1.1" y1="33.2" x2="80.3" y2="33.2" stroke="#9c9c9c" stroke-width="0.85" stroke-dasharray="4.4 0.7 2.4 0.7 3.9 0.7 2.6 0.7 1.2 0.7 4.3 0.7 2.3 0.7 2.0 0.7 1.8 0.7 1.3 0.7 1.8 0.7 2.7 0.7 3.9 0.7 4.1 0.7 2.2 0.7 2.7 0.7 2.1 0.7 4.2 0.7 3.2 0.7 3.9 0.7 3.3 0.7 2.9 0.7 3.2 0.7"/><line x1="1.1" y1="35.6" x2="31.5" y2="35.6" stroke="#9c9c9c" stroke-width="0.85" stroke-dasharray="1.3 0.7 1.5 0.7 1.4 0.7 2.9 0.7 3.5 0.7 2.1 0.7 1.8 0.7 3.2 0.7 3.4 0.7 2.3 0.7"/><line x1="1.1" y1="38.9" x2="47.1" y2="38.9" stroke="#9c9c9c" stroke-width="0.85" stroke-dasharray="1.7 0.7 3.7 0.7 3.0 0.7 4.4 0.7 2.2 0.7 4.4 0.7 3.2 0.7 1.5 0.7 3.5 0.7 1.7 0.7 3.1 0.7 4.2 0.7 2.2 0.7"/><line x1="1.1" y1="41.7" x2="75.4" y2="41.7" stroke="#9c9c9c" stroke-width="0.85" stroke-dasharray="1.2 0.7 2.7 0.7 2.6 0.7 3.9 0.7 3.2 0.7 3.0 0.7 3.3 0.7 3.7 0.7 2.1 0.7 4.3 0.7 4.1 0.7 3.0 0.7 3.9 0.7 2.1 0.7 2.2 0.7 3.4 0.7 2.8 0.7 2.1 0.7 3.4 0.7 4.1 0.7"/><line x1="1.1" y1="44.1" x2="82.4" y2="44.1" stroke="#9c9c9c" stroke-width="0.85" stroke-dasharray="2.9 0.7 4.0 0.7 2.7 0.7 3.5 0.7 4.4 0.7 4.5 0.7 2.5 0.7 1.5 0.7 3.4 0.7 3.8 0.7 3.9 0.7 2.9 0.7 4.3 0.7 3.3 0.7 2.5 0.7 3.5 0.7 4.4 0.7 2.2 0.7 3.6 0.7 3.5 0.7 2.2 0.7"/><line x1="1.1" y1="46.7" x2="59.8" y2="46.7" stroke="#9c9c9c" stroke-width="0.85" stroke-dasharray="3.1 0.7 2.6 0.7 2.5 0.7 3.0 0.7 2.7 0.7 2.1 0.7 3.8 0.7 3.9 0.7 3.8 0.7 3.5 0.7 3.9 0.7 1.4 0.7 1.2 0.7 2.4 0.7 2.7 0.7 3.7 0.7 3.2 0.7"/><line x1="1.1" y1="50.2" x2="13.1" y2="50.2" stroke="#9c9c9c" stroke-width="0.85" stroke-dasharray="1.3 0.7 4.4 0.7 3.1 0.7 3.5 0.7"/><line x1="48.5" y1="50.2" x2="84.6" y2="50.2" stroke="#9c9c9c" stroke-width="0.85" stroke-dasharray="3.7 0.7 1.8 0.7 2.1 0.7 4.0 0.7 2.7 0.7 3.8 0.7 2.6 0.7 1.7 0.7 3.1 0.7 2.7 0.7 1.4 0.7"/><line x1="48.5" y1="52.6" x2="59.8" y2="52.6" stroke="#9c9c9c" stroke-width="0.85" stroke-dasharray="2.3 0.7 3.8 0.7 1.5 0.7 4.4 0.7"/><line x1="48.5" y1="56.3" x2="81.0" y2="56.3" stroke="#9c9c9c" stroke-width="0.85" stroke-dasharray="1.7 0.7 3.7 0.7 3.5 0.7 2.3 0.7 4.0 0.7 2.4 0.7 1.6 0.7 3.0 0.7 2.2 0.7 2.7 0.7"/><line x1="1.1" y1="62.9" x2="20.2" y2="62.9" stroke="#9c9c9c" stroke-width="0.85" stroke-dasharray="1.3 0.7 1.2 0.7 2.6 0.7 2.2 0.7 4.4 0.7 3.0 0.7 1.8 0.7"/><line x1="48.5" y1="62.9" x2="55.6" y2="62.9" stroke="#9c9c9c" stroke-width="0.85" stroke-dasharray="1.6 0.7 3.4 0.7 4.2 0.7"/><line x1="62.6" y1="62.9" x2="75.4" y2="62.9" stroke="#9c9c9c" stroke-width="0.85" stroke-dasharray="2.2 0.7 3.8 0.7 2.2 0.7 3.1 0.7"/><line x1="1.1" y1="70.0" x2="32.9" y2="70.0" stroke="#9c9c9c" stroke-width="0.85" stroke-dasharray="3.3 0.7 2.6 0.7 1.3 0.7 2.6 0.7 3.3 0.7 4.2 0.7 4.0 0.7 1.5 0.7 3.4 0.7"/><line x1="1.1" y1="72.4" x2="20.2" y2="72.4" stroke="#9c9c9c" stroke-width="0.85" stroke-dasharray="3.9 0.7 3.8 0.7 4.2 0.7 2.4 0.7 4.2 0.7"/><line x1="1.1" y1="75.7" x2="10.3" y2="75.7" stroke="#9c9c9c" stroke-width="0.85" stroke-dasharray="1.4 0.7 2.4 0.7 3.6 0.7"/><line x1="1.1" y1="79.2" x2="25.2" y2="79.2" stroke="#9c9c9c" stroke-width="0.85" stroke-dasharray="3.3 0.7 2.9 0.7 2.8 0.7 1.4 0.7 2.4 0.7 4.0 0.7 1.4 0.7 2.2 0.7"/><line x1="48.5" y1="79.2" x2="55.6" y2="79.2" stroke="#9c9c9c" stroke-width="0.85" stroke-dasharray="1.4 0.7 4.0 0.7 1.2 0.7"/><line x1="62.6" y1="79.2" x2="72.5" y2="79.2" stroke="#9c9c9c" stroke-width="0.85" stroke-dasharray="2.9 0.7 4.5 0.7 2.7 0.7"/><line x1="62.6" y1="82.7" x2="76.8" y2="82.7" stroke="#9c9c9c" stroke-width="0.85" stroke-dasharray="2.2 0.7 3.4 0.7 4.2 0.7 2.3 0.7"/></g></svg></div>
<div class="a ttl" style="left:500px;top:461.10px">Приказ об увольнении и приеме на работу</div>
<div class="badge" style="top:495.50px"></div>
<div class="a btxt" style="left:501.6px;top:499.60px">Актуально на:</div>
<div class="a date" style="left:592px;top:499.80px">21.09.2025</div>
<div class="a dl" style="left:500px;top:529.30px">Скачать:</div>
<div class="ico" style="top:529.10px"><svg width="11" height="14" viewBox="0 0 11 14" style="position:absolute;left:0;top:0"><path d="M0.6 0.6 H7.4 L10.4 3.6 V13.4 H0.6 Z" fill="#f7f7f7" stroke="#8c8c8c" stroke-width="1"/><path d="M7.4 0.6 V3.6 H10.4" fill="none" stroke="#a0a0a0" stroke-width="0.8"/><rect x="2" y="2" width="5" height="1.6" rx="0.8" fill="#1c86d6"/><rect x="2.2" y="4.8" width="1.4" height="3.8" fill="#a8a8a8"/><g stroke="#b0b0b0" stroke-width="0.8"><line x1="5" y1="6" x2="9" y2="6"/><line x1="5" y1="8" x2="9" y2="8"/><line x1="2" y1="10" x2="9" y2="10"/><line x1="2" y1="11.6" x2="9" y2="11.6"/></g></svg></div>
<div class="a lnk" style="left:571.3px;top:527.60px">MS Word</div>
<div class="sep" style="top:560.60px"></div>
<div class="thumb" style="top:574.45px"><svg width="88" height="88" viewBox="0 0 88 88" style="position:absolute;left:0;top:0"><rect x="0.5" y="0.5" width="87" height="87" fill="none" stroke="#c2c2c2" stroke-width="1" stroke-dasharray="2.6 2.4"/><g transform="translate(1 1)"><line x1="66.2" y1="3.4" x2="87.4" y2="3.4" stroke="#9c9c9c" stroke-width="0.7" stroke-dasharray="2.3 0.7 3.1 0.7 4.3 0.7 4.4 0.7 3.0 0.7 4.2 0.7"/><line x1="68.6" y1="5.3" x2="87.4" y2="5.3" stroke="#9c9c9c" stroke-width="0.7" stroke-dasharray="3.5 0.7 4.2 0.7 3.5 0.7 1.4 0.7 2.7 0.7"/><line x1="71.0" y1="7.1" x2="87.4" y2="7.1" stroke="#9c9c9c" stroke-width="0.7" stroke-dasharray="4.3 0.7 3.4 0.7 3.9 0.7 3.6 0.7"/><line x1="73.4" y1="9.0" x2="87.4" y2="9.0" stroke="#9c9c9c" stroke-width="0.7" stroke-dasharray="1.9 0.7 2.4 0.7 1.9 0.7 2.8 0.7 3.4 0.7"/><line x1="67.3" y1="10.8" x2="87.4" y2="10.8" stroke="#9c9c9c" stroke-width="0.7" stroke-dasharray="1.9 0.7 3.2 0.7 1.6 0.7 3.7 0.7 2.9 0.7 2.4 0.7 2.6 0.7"/><line x1="69.7" y1="12.6" x2="87.4" y2="12.6" stroke="#9c9c9c" stroke-width="0.7" stroke-dasharray="4.4 0.7 4.3 0.7 4.4 0.7 1.3 0.7 4.0 0.7"/><line x1="72.1" y1="14.5" x2="87.4" y2="14.5" stroke="#9c9c9c" stroke-width="0.7" stroke-dasharray="1.8 0.7 2.8 0.7 2.6 0.7 2.6 0.7 4.2 0.7"/><line x1="74.5" y1="16.3" x2="87.4" y2="16.3" stroke="#9c9c9c" stroke-width="0.7" stroke-dasharray="2.1 0.7 3.8 0.7 1.8 0.7 3.5 0.7"/><line x1="1.1" y1="21.1" x2="16.0" y2="21.1" stroke="#9c9c9c" stroke-width="0.85" stroke-dasharray="1.8 0.7 2.7 0.7 2.5 0.7 3.0 0.7 2.7 0.7"/><line x1="16.0" y1="21.7" x2="86.7" y2="21.7" stroke="#b0b0b0" stroke-width="0.5"/><line x1="41.4" y1="25.1" x2="48.5" y2="25.1" stroke="#9c9c9c" stroke-width="1.1" stroke-dasharray="3.5 0.7 1.8 0.7 4.0 0.7"/><line x1="32.9" y1="27.5" x2="57.0" y2="27.5" stroke="#9c9c9c" stroke-width="1.1" stroke-dasharray="1.8 0.7 4.1 0.7 1.8 0.7 3.3 0.7 2.7 0.7 2.3 0.7 4.4 0.7"/><line x1="35.8" y1="31.0" x2="54.1" y2="31.0" stroke="#9c9c9c" stroke-width="0.85" stroke-dasharray="2.9 0.7 1.4 0.7 1.3 0.7 2.3 0.7 3.4 0.7 2.7 0.7 2.9 0.7"/><line x1="1.1" y1="33.6" x2="27.3" y2="33.6" stroke="#9c9c9c" stroke-width="0.85" stroke-dasharray="2.0 0.7 3.5 0.7 4.3 0.7 2.4 0.7 1.9 0.7 2.6 0.7 3.2 0.7 1.8 0.7"/><line x1="1.1" y1="36.4" x2="32.9" y2="36.4" stroke="#9c9c9c" stroke-width="0.85" stroke-dasharray="2.5 0.7 2.6 0.7 3.8 0.7 2.5 0.7 1.4 0.7 2.4 0.7 2.3 0.7 1.9 0.7 3.0 0.7 1.6 0.7 3.8 0.7"/><line x1="32.9" y1="37.0" x2="83.9" y2="37.0" stroke="#b0b0b0" stroke-width="0.5"/><line x1="40.0" y1="38.4" x2="51.3" y2="38.4" stroke="#9c9c9c" stroke-width="0.6" stroke-dasharray="3.0 0.7 4.2 0.7 3.1 0.7"/><line x1="1.1" y1="40.2" x2="28.7" y2="40.2" stroke="#9c9c9c" stroke-width="0.85" stroke-dasharray="1.2 0.7 2.7 0.7 2.6 0.7 3.9 0.7 3.2 0.7 3.0 0.7 3.3 0.7 3.7 0.7"/><line x1="28.7" y1="40.8" x2="83.9" y2="40.8" stroke="#b0b0b0" stroke-width="0.5"/><line x1="40.0" y1="42.6" x2="51.3" y2="42.6" stroke="#9c9c9c" stroke-width="0.6" stroke-dasharray="1.9 0.7 2.9 0.7 3.0 0.7 3.2 0.7"/><line x1="1.1" y1="44.9" x2="17.4" y2="44.9" stroke="#9c9c9c" stroke-width="0.85" stroke-dasharray="2.5 0.7 2.5 0.7 1.3 0.7 2.1 0.7 4.4 0.7 3.1 0.7"/><line x1="1.1" y1="47.3" x2="72.5" y2="47.3" stroke="#b0b0b0" stroke-width="0.5"/><line x1="25.9" y1="49.4" x2="37.2" y2="49.4" stroke="#9c9c9c" stroke-width="0.6" stroke-dasharray="4.4 0.7 3.0 0.7 1.5 0.7 4.1 0.7"/><rect x="1.1" y="52.2" width="84.2" height="22.6" fill="none" stroke="#aaa" stroke-width="0.5"/><line x1="6.1" y1="52.2" x2="6.1" y2="74.9" stroke="#aaa" stroke-width="0.5"/><line x1="30.8" y1="52.2" x2="30.8" y2="74.9" stroke="#aaa" stroke-width="0.5"/><line x1="52.0" y1="52.2" x2="52.0" y2="74.9" stroke="#aaa" stroke-width="0.5"/><line x1="62.9" y1="52.2" x2="62.9" y2="74.9" stroke="#aaa" stroke-width="0.5"/><line x1="1.1" y1="69.9" x2="85.3" y2="69.9" stroke="#bbb" stroke-width="0.4"/><line x1="1.1" y1="72.0" x2="85.3" y2="72.0" stroke="#bbb" stroke-width="0.4"/><line x1="32.9" y1="57.9" x2="49.9" y2="57.9" stroke="#9c9c9c" stroke-width="0.6" stroke-dasharray="2.4 0.7 3.7 0.7 1.6 0.7 3.2 0.7 2.9 0.7"/><line x1="32.9" y1="60.0" x2="49.9" y2="60.0" stroke="#9c9c9c" stroke-width="0.6" stroke-dasharray="2.3 0.7 3.5 0.7 3.2 0.7 4.4 0.7 2.6 0.7"/><line x1="32.9" y1="62.1" x2="49.9" y2="62.1" stroke="#9c9c9c" stroke-width="0.6" stroke-dasharray="2.6 0.7 2.5 0.7 3.9 0.7 4.3 0.7 4.2 0.7"/><line x1="32.9" y1="64.3" x2="49.9" y2="64.3" stroke="#9c9c9c" stroke-width="0.6" stroke-dasharray="2.0 0.7 1.2 0.7 2.5 0.7 3.7 0.7 2.0 0.7 4.0 0.7"/><line x1="32.9" y1="66.4" x2="49.9" y2="66.4" stroke="#9c9c9c" stroke-width="0.6" stroke-dasharray="1.5 0.7 2.9 0.7 3.8 0.7 4.2 0.7 2.5 0.7"/><line x1="64.8" y1="54.4" x2="83.9" y2="54.4" stroke="#9c9c9c" stroke-width="0.6" stroke-dasharray="1.6 0.7 4.1 0.7 3.5 0.7 2.0 0.7 3.8 0.7 4.3 0.7"/><line x1="64.8" y1="56.5" x2="83.9" y2="56.5" stroke="#9c9c9c" stroke-width="0.6" stroke-dasharray="3.1 0.7 1.8 0.7 2.8 0.7 2.1 0.7 3.6 0.7 2.6 0.7"/><line x1="64.8" y1="58.6" x2="83.9" y2="58.6" stroke="#9c9c9c" stroke-width="0.6" stroke-dasharray="3.1 0.7 1.6 0.7 1.5 0.7 3.5 0.7 1.8 0.7 2.1 0.7 2.7 0.7"/><line x1="64.8" y1="60.7" x2="83.9" y2="60.7" stroke="#9c9c9c" stroke-width="0.6" stroke-dasharray="3.2 0.7 1.7 0.7 1.5 0.7 1.6 0.7 3.0 0.7 1.5 0.7 2.0 0.7"/><line x1="64.8" y1="62.8" x2="83.9" y2="62.8" stroke="#9c9c9c" stroke-width="0.6" stroke-dasharray="3.8 0.7 1.8 0.7 4.4 0.7 3.0 0.7 3.4 0.7"/><line x1="64.8" y1="65.0" x2="83.9" y2="65.0" stroke="#9c9c9c" stroke-width="0.6" stroke-dasharray="3.3 0.7 1.8 0.7 3.9 0.7 3.4 0.7 4.2 0.7"/><line x1="64.8" y1="67.1" x2="83.9" y2="67.1" stroke="#9c9c9c" stroke-width="0.6" stroke-dasharray="2.3 0.7 3.2 0.7 4.3 0.7 1.4 0.7 4.5 0.7"/><line x1="1.8" y1="68.5" x2="4.6" y2="68.5" stroke="#9c9c9c" stroke-width="0.6" stroke-dasharray="2.2 0.7"/><line x1="11.7" y1="68.5" x2="24.4" y2="68.5" stroke="#9c9c9c" stroke-width="0.6" stroke-dasharray="2.4 0.7 2.5 0.7 1.4 0.7 3.9 0.7"/><line x1="32.9" y1="68.5" x2="49.9" y2="68.5" stroke="#9c9c9c" stroke-width="0.6" stroke-dasharray="3.6 0.7 1.7 0.7 1.7 0.7 2.9 0.7 1.8 0.7 4.2 0.7"/><line x1="53.4" y1="68.5" x2="61.2" y2="68.5" stroke="#9c9c9c" stroke-width="0.6" stroke-dasharray="1.4 0.7 1.6 0.7 3.1 0.7"/><line x1="64.8" y1="68.5" x2="83.9" y2="68.5" stroke="#9c9c9c" stroke-width="0.6" stroke-dasharray="2.6 0.7 2.5 0.7 3.5 0.7 1.7 0.7 1.4 0.7 2.2 0.7 4.3 0.7"/><line x1="1.1" y1="79.1" x2="10.3" y2="79.1" stroke="#9c9c9c" stroke-width="0.85" stroke-dasharray="3.9 0.7 1.2 0.7 4.4 0.7"/><line x1="10.3" y1="79.7" x2="69.7" y2="79.7" stroke="#b0b0b0" stroke-width="0.5"/><line x1="71.1" y1="79.1" x2="83.9" y2="79.1" stroke="#9c9c9c" stroke-width="0.85" stroke-dasharray="1.8 0.7 1.7 0.7 3.1 0.7 3.5 0.7"/><line x1="23.0" y1="81.2" x2="31.5" y2="81.2" stroke="#9c9c9c" stroke-width="0.6" stroke-dasharray="3.7 0.7 3.7 0.7"/></g></svg></div>
<div class="a ttl" style="left:500px;top:577.75px">АКТ приемки немаркированных товаров</div>
<div class="badge" style="top:612.15px"></div>
<div class="a btxt" style="left:501.6px;top:616.25px">Актуально на:</div>
<div class="a date" style="left:592px;top:616.45px">21.09.2025</div>
<div class="a dl" style="left:500px;top:645.95px">Скачать:</div>
<div class="ico" style="top:645.75px"><svg width="11" height="14" viewBox="0 0 11 14" style="position:absolute;left:0;top:0"><path d="M0.6 0.6 H7.4 L10.4 3.6 V13.4 H0.6 Z" fill="#f7f7f7" stroke="#8c8c8c" stroke-width="1"/><path d="M7.4 0.6 V3.6 H10.4" fill="none" stroke="#a0a0a0" stroke-width="0.8"/><rect x="2" y="2" width="5" height="1.6" rx="0.8" fill="#1c86d6"/><rect x="2.2" y="4.8" width="1.4" height="3.8" fill="#a8a8a8"/><g stroke="#b0b0b0" stroke-width="0.8"><line x1="5" y1="6" x2="9" y2="6"/><line x1="5" y1="8" x2="9" y2="8"/><line x1="2" y1="10" x2="9" y2="10"/><line x1="2" y1="11.6" x2="9" y2="11.6"/></g></svg></div>
<div class="a lnk" style="left:571.3px;top:644.25px">MS Word</div>
<div class="sep" style="top:677.25px"></div>
<div class="thumb" style="top:691.10px"><svg width="88" height="88" viewBox="0 0 88 88" style="position:absolute;left:0;top:0"><rect x="0.5" y="0.5" width="87" height="87" fill="none" stroke="#c2c2c2" stroke-width="1" stroke-dasharray="2.6 2.4"/><g transform="translate(1 1)"><line x1="56.0" y1="2.5" x2="84" y2="2.5" stroke="#9c9c9c" stroke-width="0.7" stroke-dasharray="2 0.6 3 0.6 1.5 0.6"/><line x1="63.0" y1="4.7" x2="84" y2="4.7" stroke="#9c9c9c" stroke-width="0.7" stroke-dasharray="2 0.6 3 0.6 1.5 0.6"/><line x1="58.0" y1="6.9" x2="84" y2="6.9" stroke="#9c9c9c" stroke-width="0.7" stroke-dasharray="2 0.6 3 0.6 1.5 0.6"/><line x1="65.0" y1="9.1" x2="84" y2="9.1" stroke="#9c9c9c" stroke-width="0.7" stroke-dasharray="2 0.6 3 0.6 1.5 0.6"/><line x1="60.0" y1="11.3" x2="84" y2="11.3" stroke="#9c9c9c" stroke-width="0.7" stroke-dasharray="2 0.6 3 0.6 1.5 0.6"/></g></svg></div>
<div class="a ttl" style="left:500px;top:694.40px">Договор поставки плодоовощной продукции из стабилизационных фондов</div></div>
</div>
</body></html>
